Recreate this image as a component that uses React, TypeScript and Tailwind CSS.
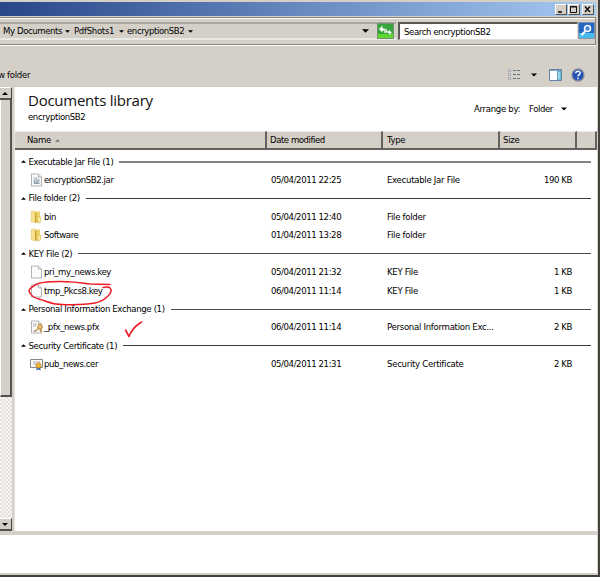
import type { ReactNode } from "react"

type IconKind = "jar" | "folder" | "file" | "pfx" | "cert"

interface FileItem {
  name: string
  date: string
  type: string
  size?: string
  icon: IconKind
}

interface FileGroup {
  title: string
  line: string
  items: FileItem[]
}

const groups: FileGroup[] = [
  {
    title: "Executable Jar File (1)",
    line: "h-[2px] bg-[#858585]",
    items: [{ name: "encryptionSB2.jar", date: "05/04/2011 22:25", type: "Executable Jar File", size: "190 KB", icon: "jar" }],
  },
  {
    title: "File folder (2)",
    line: "h-px bg-[#3c3c3c]",
    items: [
      { name: "bin", date: "05/04/2011 12:40", type: "File folder", icon: "folder" },
      { name: "Software", date: "01/04/2011 13:28", type: "File folder", icon: "folder" },
    ],
  },
  {
    title: "KEY File (2)",
    line: "h-px bg-[#4c4c4c]",
    items: [
      { name: "pri_my_news.key", date: "05/04/2011 21:32", type: "KEY File", size: "1 KB", icon: "file" },
      { name: "tmp_Pkcs8.key", date: "06/04/2011 11:14", type: "KEY File", size: "1 KB", icon: "file" },
    ],
  },
  {
    title: "Personal Information Exchange (1)",
    line: "h-px bg-[#4c4c4c]",
    items: [{ name: "_pfx_news.pfx", date: "06/04/2011 11:14", type: "Personal Information Exc...", size: "2 KB", icon: "pfx" }],
  },
  {
    title: "Security Certificate (1)",
    line: "h-px bg-[#3c3c3c]",
    items: [{ name: "pub_news.cer", date: "05/04/2011 21:31", type: "Security Certificate", size: "2 KB", icon: "cert" }],
  },
]

function Arrow({ className, up = false }: { className: string; up?: boolean }) {
  return (
    <svg viewBox="0 0 6 3" className={`shrink-0 ${className}`} fill="currentColor">
      <path d={up ? "M3 0L6 3H0z" : "M0 0h6L3 3z"} />
    </svg>
  )
}

function FileIcon({ kind }: { kind: IconKind }) {
  if (kind === "folder") {
    return (
      <svg viewBox="0 0 14 14" className="h-[14px] w-[14px]">
        <path d="M1.300 1.500L5 1l.5 11.500-4.200-.5z" fill="#f6e391" stroke="#e0c466" strokeWidth=".6" />
        <path d="M5 1.500h5v11H5z" fill="#ecd06c" />
        <path d="M5 2l1.500 1.500V13L5 12.500z" fill="#cfa535" />
        <path d="M7 7h3.800v5L8 13z" fill="#f8e79c" stroke="#d9b957" strokeWidth=".6" />
      </svg>
    )
  }
  if (kind === "cert") {
    return (
      <svg viewBox="0 0 14 14" className="h-[14px] w-[14px]">
        <path d="M.5 2.500h12v8H.5z" fill="#fafafa" stroke="#8a867f" />
        <path d="M3 5h7M3 7h3" stroke="#a8a8a8" />
        <path d="M6.500 9.500v4l2-1 2 1v-4z" fill="#356fb4" />
        <circle cx="8.500" cy="8.500" r="2.500" fill="#f1b62f" stroke="#b97c1c" strokeWidth=".7" />
      </svg>
    )
  }
  return (
    <svg viewBox="0 0 14 14" className="h-[14px] w-[14px]">
      <path d="M1.500 1h7l3 3v9h-10z" fill="#fbfbfb" stroke="#a9a9a9" strokeWidth=".9" />
      <path d="M8.500 1v3h3" fill="#e5e5e5" stroke="#a9a9a9" strokeWidth=".8" />
      {kind === "jar" && (
        <>
          <path d="M3 4h7v7H3z" fill="#dbe3ea" />
          <path d="M4.500 7v2.500h3.500V7M8 7.500h1.300M4 10.500h5.500" fill="none" stroke="#7f93a5" strokeWidth=".8" />
          <path d="M6.300 4.500v4" stroke="#c08a76" strokeWidth=".8" />
        </>
      )}
      {kind === "pfx" && (
        <>
          <path d="M3 4h4M3 6h3M3 11h4" stroke="#9a9a9a" strokeWidth=".8" />
          <circle cx="10" cy="6.800" r="2.300" fill="#f0c676" stroke="#bb8033" />
          <path d="M8.500 8.500l-4 3M10 9.500l1.500 2.500" stroke="#cb9240" strokeWidth="1.500" />
        </>
      )}
    </svg>
  )
}

function TitleButton({ children }: { children: ReactNode }) {
  return (
    <div className="flex h-[11px] w-[12px] items-center justify-center border border-t-white border-r-[#55524d] border-b-[#55524d] border-l-white bg-[#d4d0c8]">
      <svg viewBox="0 0 10 9" className="h-[9px] w-[10px]" fill="none" stroke="#111">
        {children}
      </svg>
    </div>
  )
}

function TitleBar() {
  return (
    <div className="mt-[2px] mr-[2px] flex h-[14px] shrink-0 items-center justify-end bg-linear-to-r from-[#28468a] via-[#6689bf] to-[#a6caf0] pr-[2px]">
      <TitleButton>
        <path d="M2 7h4" strokeWidth="1.600" />
      </TitleButton>
      <div className="ml-px">
        <TitleButton>
          <path d="M1.500 1.500h6v6h-6zM1.500 2h6" />
        </TitleButton>
      </div>
      <div className="ml-[2px]">
        <TitleButton>
          <path d="M2 1.500l5 5.500M7 1.500L2 7" strokeWidth="1.500" />
        </TitleButton>
      </div>
    </div>
  )
}

function AddressBar() {
  return (
    <div className="mr-[2px] flex h-[28px] shrink-0 flex-col border-t border-r border-b border-[#85827d] shadow-[inset_0_1px_#fff,0_1px_#fff]">
      <div className="mt-[4px] flex h-[18px] items-stretch">
        <div className="flex w-[396px] items-center border-t-2 border-b-2 border-t-[#aaa7a1] border-b-[#ebe9e4] pl-[3px]">
          <span className="w-[58px]">My Documents</span>
          <Arrow className="ml-[4px] h-[3px] w-[5px]" />
          <span className="ml-[4px] w-[41px] tracking-[-0.300px]">PdfShots1</span>
          <Arrow className="ml-[4px] h-[3px] w-[5px]" />
          <span className="ml-[3px] w-[59px]">encryptionSB2</span>
          <Arrow className="ml-[2px] h-[3px] w-[5px]" />
          <Arrow className="ml-auto h-[4px] w-[7px]" />
          <svg viewBox="0 0 17 16" className="mr-[2px] ml-[8px] h-[16px] w-[17px] shrink-0">
            <rect x=".5" y=".5" width="16" height="15" fill="#36a63c" stroke="#768f70" />
            <path d="M1 11h15v4H1z" fill="#62d833" />
            <path d="M5.500 2.500L2 6l3.500 3.500v-2H7V10h2V5.500H5.500z" fill="#fff" />
            <path d="M11.500 13L15 9.500 11.500 6v2H10V5.500H8V10h3.500z" fill="#fff" stroke="#2f9c35" strokeWidth=".6" />
          </svg>
        </div>
        <div className="ml-[2px] flex w-[180px] items-center border-t-2 border-r border-b border-l-2 border-t-[#5b5956] border-r-[#e2dfd9] border-b-[#e2dfd9] border-l-[#5b5956] bg-white pl-[4px]">
          Search encryptionSB2
        </div>
        <svg viewBox="0 0 17 17" className="h-[17px] w-[17px] shrink-0">
          <path d="M.5.5h16v16H.5z" fill="#2464c4" stroke="#8496aa" />
          <path d="M1 11h15v5H1z" fill="#49bced" />
          <circle cx="9.500" cy="6.500" r="3" fill="#4b85d9" stroke="#fff" strokeWidth="1.500" />
          <path d="M7 9.500L3.500 13" stroke="#fff" strokeWidth="2.200" />
        </svg>
      </div>
    </div>
  )
}

function Toolbar() {
  return (
    <div className="mt-px flex h-[41px] shrink-0 items-center overflow-hidden pt-[16px] pr-[13px]">
      <span className="-ml-[2px] tracking-[-0.300px]">w folder</span>
      <svg viewBox="0 0 12 11" className="ml-auto h-[11px] w-[12px] shrink-0" fill="none">
        <path d="M.5.5h2v2h-2zM.5 4.500h2v2h-2zM.5 8.500h2v2h-2z" fill="#f4f5f8" stroke="#8f99a9" strokeWidth=".8" />
        <path d="M5 1.500h3M9 1.500h3M5 5.500h3M9 5.500h3M5 9.500h3M9 9.500h3" stroke="#65738b" />
      </svg>
      <Arrow className="ml-[11px] h-[4px] w-[6px]" />
      <svg viewBox="0 0 13 12" className="ml-[12px] h-[12px] w-[13px] shrink-0">
        <path d="M.5.5h12v11H.5z" fill="#fff" stroke="#6581a1" />
        <path d="M1 1.500h11" stroke="#8daac8" />
        <path d="M8.500 2h3.500v9H8.500z" fill="#91d4e7" stroke="#4f93b3" strokeWidth=".8" />
      </svg>
      <svg viewBox="0 0 14 14" className="ml-[9px] h-[14px] w-[14px] shrink-0">
        <circle cx="7" cy="7" r="6" fill="#2451b5" stroke="#848b9d" strokeWidth="1.300" />
        <path d="M4.800 5.200c0-2.800 4.600-2.600 4.300 0C9 6.700 7 6.500 7 8.500M7 9.700v1.500" fill="none" stroke="#fff" strokeWidth="1.500" />
      </svg>
    </div>
  )
}

function ScrollButton({ up = false }: { up?: boolean }) {
  return (
    <div className="flex h-[13px] w-[12px] shrink-0 items-center justify-center border-t border-r border-b-2 border-t-white border-r-[#44423f] border-b-[#55534f] bg-[#d4d0c8] pr-[2px]">
      <Arrow up={up} className="h-[3px] w-[6px]" />
    </div>
  )
}

function Scrollbar() {
  return (
    <div className="flex w-[12px] shrink-0 flex-col bg-[#ecebe7]">
      <ScrollButton up />
      <div className="h-[297px] border-r-2 border-b-2 border-l border-[#55534f] border-l-white bg-[#d4d0c8]" />
      <div className="flex-1 bg-[repeating-conic-gradient(#e4e1dc_0_25%,#f8f7f5_0_50%)] bg-[length:4px_4px]" />
      <ScrollButton />
    </div>
  )
}

function ColumnHeaders() {
  const cell = "flex items-center border-t border-r-2 border-b-2 border-t-[#ece9e4] border-r-[#65625e] border-b-[#65625e]"
  return (
    <div className="flex h-[19px] shrink-0 bg-[#d4d0c8] tracking-[-0.300px]">
      <div className={`${cell} w-[252px] pl-[12px]`}>
        Name
        <Arrow up className="ml-[4px] h-[3px] w-[5px] text-[#77736d]" />
      </div>
      <div className={`${cell} w-[116px] pl-[3px] tracking-[-0.450px]`}>Date modified</div>
      <div className={`${cell} w-[117px] pl-[4px]`}>Type</div>
      <div className={`${cell} w-[77px] pl-[3px]`}>Size</div>
      <div className={`${cell} w-[20px]`} />
    </div>
  )
}

function FileRow({ item }: { item: FileItem }) {
  return (
    <div className="flex h-[18.450px] items-center">
      <div className="flex w-[255px] items-center pl-[14px]">
        <FileIcon kind={item.icon} />
        <span>{item.name}</span>
      </div>
      <span className="w-[116px]">{item.date}</span>
      <span className="w-[116px] tracking-[-0.280px]">{item.type}</span>
      <span className="w-[69px] text-right">{item.size}</span>
    </div>
  )
}

function Annotations() {
  return (
    <svg viewBox="0 0 125 64" className="pointer-events-none absolute top-[277px] left-[24px] h-[64px] w-[125px]" fill="none" stroke="#ee1c25" strokeLinecap="round" strokeLinejoin="round">
      <path d="M86 7.500L66 7C56 5.500 46 4.500 36 4.500S16 4.500 11 8C7 10.500 5 12 5 14c1 3 2 4 4 5.500 3 2.500 7 2.500 12 4.500 5 2 10 3.500 17 3.500 12 .5 24 0 33-1.500 6-1 10-4 13-7 3-2.500 4-6 2-8-1.500-1.500-4-1-7-.5" strokeWidth="1.500" />
      <path d="M101.500 53l3.500 6.500c2-6 7-11 12.500-14.500" strokeWidth="1.600" />
    </svg>
  )
}

function Library() {
  return (
    <div className="flex w-[582px] flex-col bg-white">
      <div className="flex h-[44px] shrink-0 justify-between pr-[30px] pl-[13px]">
        <div>
          <h1 className="mt-[3px] h-[20px] font-['Open_Sans','Noto_Sans',sans-serif] text-[15px] leading-[20px] tracking-[-0.250px] text-[#111] [font-stretch:100%]">Documents library</h1>
          <p className="h-[14px] leading-[14px]">encryptionSB2</p>
        </div>
        <div className="flex h-[44px] items-center">
          <span className="w-[47px] tracking-[-0.300px]">Arrange by:</span>
          <span className="ml-[8px] w-[25px]">Folder</span>
          <Arrow className="ml-[7px] h-[4px] w-[6px]" />
        </div>
      </div>
      <ColumnHeaders />
      <div className="mt-[2.300px] pl-[1px]">
        {groups.map((group) => (
          <section key={group.title}>
            <div className="flex h-[18.450px] items-center pr-[6px] pl-[5px]">
              <Arrow up className="h-[3px] w-[5px]" />
              <h2 className="ml-[2.500px] tracking-[-0.350px]">{group.title}</h2>
              <div className={`ml-[6px] flex-1 ${group.line}`} />
            </div>
            {group.items.map((item) => (
              <FileRow key={item.name} item={item} />
            ))}
          </section>
        ))}
      </div>
    </div>
  )
}

export default function App() {
  return (
    <div className="relative flex h-[577px] w-[600px] flex-col overflow-hidden border-r-2 border-b-2 border-[#44413f] bg-[#d4d0c8] font-['DejaVu_Sans_Condensed','DejaVu_Sans',sans-serif] text-[9.500px] leading-[14px] tracking-[-0.400px] whitespace-nowrap text-black [font-stretch:condensed]">
      <TitleBar />
      <div className="h-px shrink-0" />
      <AddressBar />
      <Toolbar />
      <div className="flex h-[444px] shrink-0">
        <Scrollbar />
        <div className="w-[3px] border-r border-[#e8e5df]" />
        <Library />
      </div>
      <div className="h-[4px] shrink-0" />
      <div className="mr-px mb-[2px] flex-1 bg-white" />
      <Annotations />
    </div>
  )
}
